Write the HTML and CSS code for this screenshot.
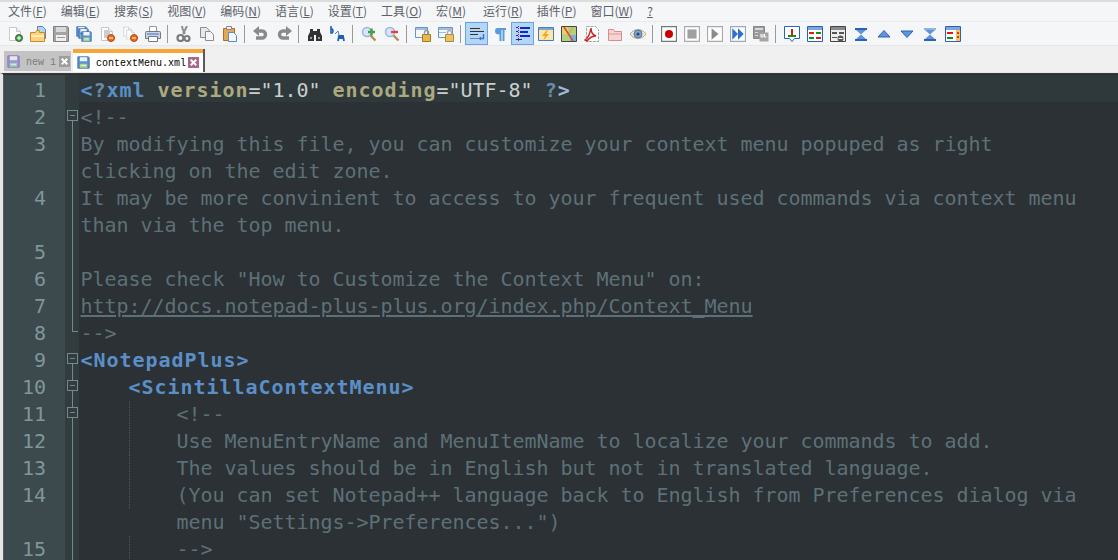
FILE: index.html
```html
<!DOCTYPE html>
<html lang="zh">
<head>
<meta charset="utf-8">
<title>contextMenu.xml - Notepad++</title>
<link rel="stylesheet" href="styles.css">
</head>
<body>
<svg class="defs" width="0" height="0">
  <defs>
    <symbol id="i-save" viewBox="0 0 16 16"><path d="M1 1h13l1 1v13H1z" fill="#5b8fd0" stroke="#3a66a8"/><path d="M3.500 1.500h9v5h-9z" fill="#eef4fb"/><path d="M3.500 9.500h9v5h-9z" fill="#a9d78a"/><path d="M5 11h6v1H5z" fill="#fff"/></symbol>
    <symbol id="i-page" viewBox="0 0 16 16"><path d="M2.500 1.500h7l4 4v9h-11z" fill="#fff" stroke="#c8c8c8"/><path d="M9.500 1.500v4h4" fill="#eee" stroke="#c8c8c8"/></symbol>
    <symbol id="i-x" viewBox="0 0 12 12"><path d="M3 3l6 6M9 3l-6 6" stroke="#fff" stroke-width="2.200" fill="none"/></symbol>
  </defs>
</svg>

<nav class="menubar">
  <span class="menu">文件(<u>F</u>)</span>
  <span class="menu">编辑(<u>E</u>)</span>
  <span class="menu">搜索(<u>S</u>)</span>
  <span class="menu">视图(<u>V</u>)</span>
  <span class="menu">编码(<u>N</u>)</span>
  <span class="menu">语言(<u>L</u>)</span>
  <span class="menu">设置(<u>T</u>)</span>
  <span class="menu">工具(<u>O</u>)</span>
  <span class="menu menu-short">宏(<u>M</u>)</span>
  <span class="menu">运行(<u>R</u>)</span>
  <span class="menu">插件(<u>P</u>)</span>
  <span class="menu">窗口(<u>W</u>)</span>
  <span class="menu"><u>?</u></span>
</nav>

<div class="toolbar">
  <span class="tool"><svg class="ico" viewBox="0 0 16 16"><use href="#i-page"/><circle cx="12" cy="12" r="3.500" fill="#4d9a4d" stroke="#2e6e2e"/><path d="M10 12h4M12 10v4" stroke="#fff"/></svg></span>
  <span class="tool"><svg class="ico" viewBox="0 0 16 16"><path d="M7.500.5h5l3 3v9h-8z" fill="#b8d2f0" stroke="#4f86c6"/><path d="M.5 6.500h5l1-2h3v2h5v9H.5z" fill="#fbd27e" stroke="#cf8a22"/><path d="M1 10h13" stroke="#fff"/></svg></span>
  <span class="tool"><svg class="ico" viewBox="0 0 16 16"><path d="M.5.5h14l1 1v14H.5z" fill="#a4a4a4" stroke="#808080"/><path d="M3 1h10v5H3z" fill="#d8d8d8"/><path d="M3 9h10v6H3z" fill="#f0f0f0"/><path d="M4 11h8v1H4z" fill="#999"/></svg></span>
  <span class="tool"><svg class="ico" viewBox="0 0 16 16"><use href="#i-save" width="11" height="11" x="0" y="0"/><use href="#i-save" width="11" height="11" x="2" y="2"/><use href="#i-save" width="11" height="11" x="5" y="5"/></svg></span>
  <span class="tool"><svg class="ico" viewBox="0 0 16 16"><use href="#i-page"/><path d="M5 5h4M5 7h6M5 9h5M5 11h3" stroke="#999"/><circle cx="12" cy="12" r="3.500" fill="#ee6a18" stroke="#b8440a"/><path d="M10 12h4" stroke="#fff"/></svg></span>
  <span class="tool"><svg class="ico" viewBox="0 0 16 16"><use href="#i-page" width="11" height="11"/><use href="#i-page" width="11" height="11" x="3" y="3"/><circle cx="12" cy="12" r="3.500" fill="#ee6a18" stroke="#b8440a"/><path d="M10 12h4" stroke="#fff"/></svg></span>
  <span class="tool"><svg class="ico" viewBox="0 0 16 16"><path d="M4.500.5h7v5h-7z" fill="#fff" stroke="#9a9a9a"/><path d="M.5 6.500q0-1 1-1h13q1 0 1 1v6h-15z" fill="#cfd6df" stroke="#6f7a88"/><path d="M2 7h12v2H2z" fill="#7fa6d8"/><path d="M3.500 10.500h9v5h-9z" fill="#fff" stroke="#6f7a88"/></svg></span>
  <span class="sep"></span>
  <span class="tool"><svg class="ico" viewBox="0 0 16 16"><path d="M11 0L7 8M6 0c0 3 2 6 3 8" stroke="#8f8f8f" stroke-width="2" fill="none"/><circle cx="4.500" cy="12" r="3" fill="none" stroke="#7a7a7a" stroke-width="2.200"/><circle cx="11" cy="12.500" r="2.500" fill="none" stroke="#7a7a7a" stroke-width="2.200"/></svg></span>
  <span class="tool"><svg class="ico" viewBox="0 0 16 16"><path d="M1.500 1.500h6l3 3v7h-9z" fill="#e8e8e8" stroke="#8c8c8c"/><path d="M6.500 5.500h5l3 3v6h-8z" fill="#f6f6f6" stroke="#8c8c8c"/></svg></span>
  <span class="tool"><svg class="ico" viewBox="0 0 16 16"><path d="M1.500 2.500h11v12h-11z" fill="#e2a75a" stroke="#a8702a"/><path d="M4.500.5h5v3h-5z" fill="#eee" stroke="#8a8a8a"/><path d="M6.500 6.500h5l3 3v6h-8z" fill="#f4f8fd" stroke="#5a8cc8"/></svg></span>
  <span class="sep"></span>
  <span class="tool"><svg class="ico" viewBox="0 0 16 16"><path d="M3 5h6a3.500 3.500 0 0 1 0 7H3" fill="none" stroke="#8a8a8a" stroke-width="3.400"/><path d="M6 0L0 5l6 5z" fill="#8a8a8a"/></svg></span>
  <span class="tool"><svg class="ico" viewBox="0 0 16 16"><path d="M13 5H7a3.500 3.500 0 0 0 0 7h6" fill="none" stroke="#8a8a8a" stroke-width="3.400"/><path d="M10 0l6 5-6 5z" fill="#8a8a8a"/></svg></span>
  <span class="sep"></span>
  <span class="tool"><svg class="ico" viewBox="0 0 16 16"><path d="M3 3h3v2h4V3h3v3l2 4v5H9V9H7v6H1v-5l2-4z" fill="#333"/><path d="M3 11h2v2H3zM11 11h2v2h-2z" fill="#9a9a9a"/></svg></span>
  <span class="tool"><svg class="ico" viewBox="0 0 16 16"><path d="M1 0v7h1a2.500 2.500 0 0 0 0-4H1" fill="none" stroke="#1f5fb4" stroke-width="1.600"/><path d="M5 8l3-3 1 4" fill="none" stroke="#3b7fd0"/><path d="M8 15l1-5h4l1 5M9 12h4" fill="none" stroke="#1f5fb4" stroke-width="1.800"/></svg></span>
  <span class="sep"></span>
  <span class="tool"><svg class="ico" viewBox="0 0 16 16"><circle cx="6" cy="6" r="4.500" fill="#d6e6f8" stroke="#9ab8dc" stroke-width="1.500"/><path d="M9.500 9.500l5 5" stroke="#b88a50" stroke-width="2.400"/><path d="M7 6h7M10.500 2.500v7" stroke="#46a046" stroke-width="2.400"/></svg></span>
  <span class="tool"><svg class="ico" viewBox="0 0 16 16"><circle cx="6" cy="6" r="4.500" fill="#d6e6f8" stroke="#9ab8dc" stroke-width="1.500"/><path d="M9.500 9.500l5 5" stroke="#b88a50" stroke-width="2.400"/><path d="M7 6h7" stroke="#e0404a" stroke-width="2.400"/></svg></span>
  <span class="sep"></span>
  <span class="tool"><svg class="ico" viewBox="0 0 16 16"><path d="M.5 1.500h12v10H.5z" fill="#f4f8fd" stroke="#6a93c8"/><path d="M1 2h11v2H1z" fill="#9cbde4"/><path d="M7.500 8.500h8v7h-8z" fill="#e8b84e" stroke="#a87a1e"/><path d="M9.500 8.500v-2a2 2 0 0 1 4 0v2" fill="none" stroke="#9a9a9a" stroke-width="1.400"/></svg></span>
  <span class="tool"><svg class="ico" viewBox="0 0 16 16"><path d="M.5 1.500h14v10H.5z" fill="#f4f8fd" stroke="#6a93c8"/><path d="M1 2h13v2H1zM1 6h7v1H1z" fill="#9cbde4"/><path d="M7.500 8.500h8v7h-8z" fill="#ecc468" stroke="#b08a30"/><path d="M9.500 8.500v-2a2 2 0 0 1 4 0v2" fill="none" stroke="#aaa" stroke-width="1.400"/></svg></span>
  <span class="sep"></span>
  <span class="tool tool-on"><svg class="ico" viewBox="0 0 16 16"><path d="M1 2h10v1H1zM1 5h14v1H1zM1 8h8v1H1z" fill="#333"/><path d="M1 12h9v1H1z" fill="#5a8cc8"/><path d="M14.500 8v4.500H11" fill="none" stroke="#3a74c0" stroke-width="1.400"/><path d="M12 10.500v4l-2.500-2z" fill="#3a74c0"/></svg></span>
  <span class="tool"><svg class="ico" viewBox="0 0 16 16"><path d="M5 2h9v2h-1.500v11h-2V4h-1v11h-2V8.500C4.500 8.500 3 7.500 3 5.300S4 2 5 2z" fill="#5b9bdc"/></svg></span>
  <span class="tool tool-on"><svg class="ico" viewBox="0 0 16 16"><path d="M3.500 0v16" stroke="#d01818" stroke-dasharray="1 1"/><path d="M5 1h10v2H5zM5 5h8v2H5zM5 9h10v2H5z" fill="#0a2ad0"/><path d="M1 1h2v1H1zM1 5h2v1H1zM1 9h2v1H1zM1 13h6v1H1z" fill="#0a2ad0"/></svg></span>
  <span class="tool"><svg class="ico" viewBox="0 0 16 16"><path d="M.5 1.500h15v13H.5z" fill="#fbe8a8" stroke="#4a7cbc"/><path d="M1 2h14v2H1z" fill="#7fa6d8"/><path d="M9 4L4 10h3l-2 5 6-7H8l2-4z" fill="#eda82a"/></svg></span>
  <span class="tool"><svg class="ico" viewBox="0 0 16 16"><path d="M.5.5h15v15H.5z" fill="#b4cf7e" stroke="#44484c"/><path d="M1 1h6v7H1z" fill="#e8d06a"/><path d="M9 9h6v6H9z" fill="#7fb0d8"/><path d="M3 1l9 14" stroke="#d84a3a" stroke-width="1.500"/><path d="M12 1L8 8" stroke="#e8a020"/></svg></span>
  <span class="tool"><svg class="ico" viewBox="0 0 16 16"><path d="M2.500.5h9l3 3v12h-12z" fill="#fff" stroke="#a0a0a0" stroke-dasharray="3 1"/><path d="M1 14C4 12 6 8 7 2c0 4 2 7 5 8-3 0-6 1-9 5z" fill="none" stroke="#d02020" stroke-width="1.500"/></svg></span>
  <span class="tool"><svg class="ico" viewBox="0 0 16 16"><path d="M1.500 3.500h5l1 2h7v9h-13z" fill="#f6d4d4" stroke="#d88c8c"/><path d="M2 8h12" stroke="#e8a8a8" stroke-width="1.500"/></svg></span>
  <span class="tool"><svg class="ico" viewBox="0 0 16 16"><path d="M0 8c4-6 12-6 16 0-4 6-12 6-16 0z" fill="#f0e8d8" stroke="#c0a888"/><circle cx="8" cy="8" r="4" fill="#7fa4d0" stroke="#54789f"/><circle cx="8" cy="8" r="1.600" fill="#2e4a70"/></svg></span>
  <span class="sep"></span>
  <span class="tool"><svg class="ico" viewBox="0 0 14 14"><path d="M.5.500h13v13H.5z" fill="#fff" stroke="#777"/><circle cx="7" cy="7" r="3.500" fill="#c80000"/></svg></span>
  <span class="tool"><svg class="ico" viewBox="0 0 14 14"><path d="M.5.500h13v13H.5z" fill="#fff" stroke="#aaa"/><path d="M3 3h8v8H3z" fill="#a0a0a0"/></svg></span>
  <span class="tool"><svg class="ico" viewBox="0 0 14 14"><path d="M.5.500h13v13H.5z" fill="#fff" stroke="#aaa"/><path d="M4 2l6 5-6 5z" fill="#8a8a8a"/></svg></span>
  <span class="tool"><svg class="ico" viewBox="0 0 14 14"><path d="M.5.500h13v13H.5z" fill="#fff" stroke="#9aa8b8"/><path d="M2 2l5 5-5 5zM7 2l5 5-5 5z" fill="#2f6fd0"/></svg></span>
  <span class="tool"><svg class="ico" viewBox="0 0 16 16"><path d="M.5.5h11v12H.5z" fill="#9a9a9a" stroke="#888"/><path d="M2 2h8v2H2zM2 6h3v1H2zM2 9h3v1H2z" fill="#d8d8d8"/><path d="M6.500 6.500h9v9h-9z" fill="#a4a4a4"/><path d="M8 8v3h2V8M11.500 8v3h2" fill="none" stroke="#fff"/></svg></span>
  <span class="sep"></span>
  <span class="tool"><svg class="ico" viewBox="0 0 16 16"><path d="M.5.500h15v12h-5l-2.500 3-2.500-3h-5z" fill="#fff" stroke="#2a62b8"/><path d="M7 3h2v6H7z" fill="#d81818"/><path d="M4 9h8v2H4z" fill="#1a8a1a"/></svg></span>
  <span class="tool"><svg class="ico" viewBox="0 0 16 16"><path d="M.5.500h15v15H.5z" fill="#fff" stroke="#2a62b8"/><path d="M1 1h14v3H1z" fill="#7fa6d8"/><path d="M2 6h5v2H2zM9 11h5v2H9z" fill="#e01818"/><path d="M9 6h5v2H9zM2 11h5v2H2z" fill="#1a8a1a"/></svg></span>
  <span class="tool"><svg class="ico" viewBox="0 0 16 16"><path d="M.5.500h15v15H.5z" fill="#eee" stroke="#444"/><path d="M1 1h14v3H1z" fill="#888"/><path d="M2 6h5v2H2zM9 6h5v2H9zM2 11h5v1H2z" fill="#555"/><circle cx="10.500" cy="12.500" r="3" fill="#555"/><path d="M8.500 12.500h4" stroke="#fff"/></svg></span>
  <span class="tool"><svg class="ico" viewBox="0 0 16 16"><path d="M2 2h12v2H2zM2 13h12v2H2z" fill="#2a62b8"/><path d="M3 4h10L8 8.500zM8 8.500L13 13H3z" fill="#5f94d8"/></svg></span>
  <span class="tool"><svg class="ico" viewBox="0 0 16 16"><path d="M8 4.500l6 6.500H2z" fill="#5f94d8" stroke="#2a62b8"/></svg></span>
  <span class="tool"><svg class="ico" viewBox="0 0 16 16"><path d="M2 5h12l-6 6.500z" fill="#5f94d8" stroke="#2a62b8"/></svg></span>
  <span class="tool"><svg class="ico" viewBox="0 0 16 16"><path d="M2 2h12v2H2z" fill="#8fb4e4"/><path d="M3 4h10L8 8.500zM8 8.500L13 13H3z" fill="#5f94d8"/><path d="M2 13h12v2H2z" fill="#2a62b8"/></svg></span>
  <span class="tool"><svg class="ico" viewBox="0 0 16 16"><path d="M.5.500h15v15H.5z" fill="#fff" stroke="#2a62b8"/><path d="M1 1h14v3H1z" fill="#7fa6d8"/><path d="M11 4h4v11h-4z" fill="#f4c266"/><path d="M2 6h6v2H2z" fill="#e01818"/><path d="M2 11h6v2H2z" fill="#1a8a1a"/><path d="M12 6h2v2h-2zM12 10h2v2h-2z" fill="#d83a18"/></svg></span>
</div>

<div class="tabbar">
  <div class="tab">
    <svg class="tab-ico" viewBox="0 0 16 16"><use href="#i-save"/></svg>
    <span class="tab-name">new 1</span>
    <svg class="tab-close" viewBox="0 0 12 12"><use href="#i-x"/></svg>
  </div>
  <div class="tab tab-active">
    <svg class="tab-ico" viewBox="0 0 16 16"><use href="#i-save"/></svg>
    <span class="tab-name">contextMenu.xml</span>
    <svg class="tab-close" viewBox="0 0 12 12"><use href="#i-x"/></svg>
  </div>
</div>

<main class="editor">
  <div class="row caret"><span class="num">1</span><span class="fold"></span><code class="code"><b class="tag">&lt;</b><b class="pi">?</b><b class="tag">xml</b> <b class="attr">version</b>="1.0" <b class="attr">encoding</b>="UTF-8" <b class="pi">?</b><b class="tag2">&gt;</b></code></div>
  <div class="row"><span class="num">2</span><span class="fold fold-open fold-start"></span><code class="code cm">&lt;!--</code></div>
  <div class="row"><span class="num">3</span><span class="fold fold-line"></span><code class="code cm">By modifying this file, you can customize your context menu popuped as right<br>clicking on the edit zone.</code></div>
  <div class="row"><span class="num">4</span><span class="fold fold-line"></span><code class="code cm">It may be more convinient to access to your frequent used commands via context menu<br>than via the top menu.</code></div>
  <div class="row"><span class="num">5</span><span class="fold fold-line"></span><code class="code cm"></code></div>
  <div class="row"><span class="num">6</span><span class="fold fold-line"></span><code class="code cm">Please check "How to Customize the Context Menu" on:</code></div>
  <div class="row"><span class="num">7</span><span class="fold fold-line"></span><code class="code cm"><u>http://docs.notepad-plus-plus.org/index.php/Context_Menu</u></code></div>
  <div class="row"><span class="num">8</span><span class="fold fold-end"></span><code class="code cm">--&gt;</code></div>
  <div class="row"><span class="num">9</span><span class="fold fold-open fold-start"></span><code class="code"><b class="tag">&lt;NotepadPlus&gt;</b></code></div>
  <div class="row"><span class="num">10</span><span class="fold fold-open fold-line"></span><code class="code">    <b class="tag">&lt;ScintillaContextMenu&gt;</b></code></div>
  <div class="row"><span class="num">11</span><span class="fold fold-open fold-line"></span><code class="code cm"><span class="indent"></span><span class="guide"></span>&lt;!--</code></div>
  <div class="row"><span class="num">12</span><span class="fold fold-line"></span><code class="code cm"><span class="indent"></span><span class="guide"></span>Use MenuEntryName and MenuItemName to localize your commands to add.</code></div>
  <div class="row"><span class="num">13</span><span class="fold fold-line"></span><code class="code cm"><span class="indent"></span><span class="guide"></span>The values should be in English but not in translated language.</code></div>
  <div class="row"><span class="num">14</span><span class="fold fold-line"></span><code class="code cm"><span class="indent"></span><span class="guide"></span>(You can set Notepad++ language back to English from Preferences dialog via<br>        menu "Settings-&gt;Preferences...")</code></div>
  <div class="row"><span class="num">15</span><span class="fold fold-line"></span><code class="code cm"><span class="indent"></span><span class="guide"></span>--&gt;</code></div>
</main>
</body>
</html>
```
FILE: styles.css
```css
html, body {
  margin: 0;
  padding: 0;
  height: 560px;
  overflow: hidden;
  background: #f0f0f0;
}

.defs {
  position: absolute;
}

.menubar {
  display: flex;
  gap: 14px;
  height: 19px;
  padding-left: 8px;
  align-items: flex-start;
  background: #f5f6f8;
  border-top: 2px solid #dcdcdc;
  font: 12px/17px "Noto Sans CJK SC", "Liberation Sans", sans-serif;
  color: #5c6168;
}

.menu {
  white-space: nowrap;
}

.menu-short {
  margin-right: 3px;
}

.toolbar {
  display: flex;
  height: 23px;
  padding-left: 3px;
  align-items: center;
  background: #f5f6f8;
  border-top: 1px solid #ebecee;
  border-bottom: 1px solid #e6e7e9;
}

.tool {
  display: flex;
  flex: none;
  width: 23px;
  height: 23px;
  align-items: center;
  justify-content: center;
  box-sizing: border-box;
}

.tool-on {
  background: #b5d5f7;
  outline: 1px solid #6aa4e4;
  outline-offset: -1px;
}

.ico {
  display: block;
  width: 16px;
  height: 16px;
}

.sep {
  flex: none;
  width: 1px;
  height: 18px;
  margin: 0 4px 0 3px;
  background: #9a9a9a;
}

.tabbar {
  display: flex;
  height: 27px;
  padding-left: 4px;
  gap: 1px;
  align-items: flex-end;
  background: #f0f0f0;
  box-sizing: border-box;
  border-bottom: 1px solid #e8e8e8;
}

.tab {
  display: flex;
  width: 68px;
  height: 21px;
  margin-bottom: 1px;
  padding-left: 3px;
  align-items: center;
  box-sizing: border-box;
  background: #c3c3c3;
  border: solid #f0f0f0;
  border-width: 1px 1px 0 0;
  font: 10px "Liberation Mono", monospace;
  color: #7c7c7c;
}

.tab-active {
  position: relative;
  width: 132px;
  height: 23px;
  margin-bottom: 0;
  padding: 4px 0 0 4px;
  background: #fff;
  border: solid #5a5a5a;
  border-width: 0 2px 0 0;
  color: #000;
}

.tab-active::before {
  content: "";
  position: absolute;
  top: 0;
  left: 0;
  right: 0;
  height: 4px;
  background: #f9a535;
}

.tab-ico {
  flex: none;
  width: 13px;
  height: 13px;
}

.tab:not(.tab-active) .tab-ico {
  opacity: .75;
  filter: hue-rotate(40deg);
}

.tab-name {
  margin-left: 6px;
  padding-top: 2px;
  white-space: nowrap;
}

.tab-close {
  flex: none;
  width: 11px;
  height: 11px;
  margin-left: 3px;
  background: #9e9e9e;
}

.tab-active .tab-close {
  margin-left: 2px;
  background: #a8688a;
}

.editor {
  height: 487px;
  overflow: hidden;
  padding-top: 1px;
  box-sizing: border-box;
  background: #2b3135;
  border-top: 1px solid #3a3a3a;
  border-left: 3px solid #e4e4e4;
  font: 20px/27px "DejaVu Sans Mono", monospace;
}

.row {
  display: flex;
  border-left: 1px solid #555c60;
}

.caret {
  background: #2f393c;
}

.num {
  flex: none;
  width: 42px;
  padding: 2px 19px 0 0;
  margin-bottom: -2px;
  text-align: right;
  color: #7f969b;
  background: #3c494d;
}

.fold {
  flex: none;
  position: relative;
  width: 14px;
  background: #323c3f;
}

.fold-line::before,
.fold-start::before,
.fold-end::before {
  content: "";
  position: absolute;
  left: 7px;
  width: 1px;
  background: #6f8a90;
}

.fold-line::before {
  top: 0;
  bottom: 0;
}

.fold-start::before {
  top: 14px;
  bottom: 0;
}

.fold-end::before {
  top: 0;
  height: 13px;
  width: 5px;
  background: none;
  border: solid #6f8a90;
  border-width: 0 0 1px 1px;
}

.fold-open::after {
  content: "";
  position: absolute;
  left: 2px;
  top: 8px;
  width: 9px;
  height: 9px;
  border: 1px solid #6f8a90;
  background: linear-gradient(#6f8a90, #6f8a90) center / 5px 1px no-repeat #323c3f;
}

.code {
  flex: 1;
  padding: 2px 0 0 1.5px;
  margin-bottom: -2px;
  min-height: 27px;
  font: inherit;
  letter-spacing: -.04px;
  white-space: pre;
  color: #c9cfcf;
}

.cm {
  color: #5e7077;
}

.cm u {
  text-underline-offset: 2px;
}

.code b {
  font-weight: 700;
  letter-spacing: .96px;
}

.tag {
  color: #5b8fc7;
}

.tag2 {
  color: #9db8d8;
}

.pi {
  color: #6c8aa8;
}

.attr {
  color: #aca97f;
}

.indent {
  display: inline-block;
  width: 48px;
  height: 27px;
  vertical-align: top;
}

.guide {
  display: inline-block;
  width: 47px;
  height: 27px;
  vertical-align: top;
  border-left: 1px dotted #4b5a5f;
}
```
